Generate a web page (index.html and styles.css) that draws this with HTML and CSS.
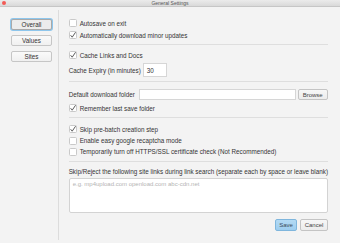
FILE: index.html
```html
<!DOCTYPE html>
<html>
<head>
<meta charset="utf-8">
<link rel="stylesheet" href="styles.css">
</head>
<body>
<div class="window">
  <div class="titlebar">
    <span class="close-dot"></span>
    <span class="title">General Settings</span>
  </div>
  <div class="main">
    <nav class="sidebar">
      <button class="nav-btn active">Overall</button>
      <button class="nav-btn">Values</button>
      <button class="nav-btn">Sites</button>
    </nav>
    <section class="content">
      <label class="check-row r1"><span class="cb"></span>Autosave on exit</label>
      <label class="check-row"><span class="cb checked"><svg viewBox="0 0 8 8"><polyline points="1.6,4.2 3.2,6.2 6.6,1.2"/></svg></span>Automatically download minor updates</label>
      <hr class="sep s1">
      <label class="check-row r3"><span class="cb checked"><svg viewBox="0 0 8 8"><polyline points="1.6,4.2 3.2,6.2 6.6,1.2"/></svg></span>Cache Links and Docs</label>
      <div class="field-row expiry">
        <span class="lbl">Cache Expiry (in minutes)</span>
        <span class="input small">30</span>
      </div>
      <hr class="sep s2">
      <div class="field-row download">
        <span class="lbl">Default download folder</span>
        <span class="input wide"></span>
        <button class="btn browse">Browse</button>
      </div>
      <label class="check-row r-remember"><span class="cb checked"><svg viewBox="0 0 8 8"><polyline points="1.6,4.2 3.2,6.2 6.6,1.2"/></svg></span>Remember last save folder</label>
      <hr class="sep s3">
      <label class="check-row r-skip"><span class="cb checked"><svg viewBox="0 0 8 8"><polyline points="1.6,4.2 3.2,6.2 6.6,1.2"/></svg></span>Skip pre-batch creation step</label>
      <label class="check-row short"><span class="cb"></span>Enable easy google recaptcha mode</label>
      <label class="check-row short"><span class="cb"></span>Temporarily turn off HTTPS/SSL certificate check (Not Recommended)</label>
      <hr class="sep s4">
      <div class="skip-label">Skip/Reject the following site links during link search (separate each by space or leave blank)</div>
      <div class="textarea"><span class="placeholder">e.g. mp4upload.com openload.com abc-cdn.net</span></div>
      <div class="actions">
        <button class="btn save">Save</button>
        <button class="btn cancel">Cancel</button>
      </div>
    </section>
  </div>
</div>
</body>
</html>
```

FILE: styles.css
```css
html, body {
  margin: 0;
  padding: 0;
}
body {
  width: 340px;
  height: 243px;
  overflow: hidden;
  background: #f3f3f3;
  font-family: "Liberation Sans", Arial, sans-serif;
  font-size: 6.3px;
  color: #333;
}
.window {
  width: 340px;
  height: 243px;
  display: flex;
  flex-direction: column;
}
.titlebar {
  height: 7px;
  flex: none;
  box-sizing: border-box;
  background: linear-gradient(#ebebeb, #d9d9d9);
  border-bottom: 1px solid #c6c6c6;
  position: relative;
  display: flex;
  align-items: center;
  justify-content: center;
}
.close-dot {
  position: absolute;
  left: 2px;
  top: 1px;
  width: 4px;
  height: 4px;
  border-radius: 50%;
  background: #f25a55;
}
.title {
  font-size: 5px;
  color: #555;
  line-height: 6px;
}
.main {
  display: flex;
  flex: 1;
  padding-top: 3px;
}
.sidebar {
  width: 58px;
  height: 221px;
  border-right: 1px solid #dcdcdc;
  box-sizing: border-box;
  display: flex;
  flex-direction: column;
  align-items: flex-start;
  gap: 5px;
  padding: 9px 0 0 11px;
  box-sizing: content-box;
  width: 47px;
}
.nav-btn {
  width: 41px;
  height: 11px;
  box-sizing: border-box;
  margin: 0;
  padding: 0;
  font-family: inherit;
  font-size: 6.3px;
  color: #333;
  background: linear-gradient(#fafafa, #f0f0f0);
  border: 1px solid #c6c6c6;
  border-radius: 2px;
}
.nav-btn.active {
  background: #ececec;
  border-color: #a9a9a9;
  box-shadow: 0 0 0 1px #8ec6ec;
}
.content {
  flex: 1;
  padding: 7px 12px 0 10px;
  display: flex;
  flex-direction: column;
}
.check-row {
  display: flex;
  align-items: center;
  height: 12px;
  gap: 3px;
  white-space: nowrap;
}
.check-row.short {
  height: 11px;
}
.cb {
  width: 8px;
  height: 8px;
  box-sizing: border-box;
  background: #fff;
  border: 1px solid #c9c9c9;
  border-radius: 1.5px;
  flex: none;
  position: relative;
}
.cb svg {
  position: absolute;
  left: -1px;
  top: -1px;
  width: 8px;
  height: 8px;
  fill: none;
  stroke: #4a4a4a;
  stroke-width: 0.9;
}
.sep {
  border: 0;
  height: 1px;
  background: #dedede;
  margin: 0;
}
.s1 { margin-top: 3px; }
.r3 { margin-top: 4px; }
.s2 { margin-top: 4px; }
.s3 { margin-top: 3px; }
.r-skip { margin-top: 5px; }
.s4 { margin-top: 4px; }
.field-row {
  display: flex;
  align-items: center;
  white-space: nowrap;
}
.expiry {
  margin-top: 2px;
  height: 14px;
}
.expiry .lbl {
  width: 74px;
}
.input {
  background: #fff;
  border: 1px solid #d6d6d6;
  box-sizing: border-box;
  display: flex;
  align-items: center;
}
.input.small {
  width: 24px;
  height: 14px;
  padding-left: 3px;
}
.download {
  margin-top: 7px;
  height: 11px;
}
.download .lbl {
  width: 70px;
}
.input.wide {
  width: 157px;
  height: 11px;
}
.btn {
  margin: 0;
  padding: 0;
  font-family: inherit;
  font-size: 6px;
  color: #444;
  box-sizing: border-box;
  border: 1px solid #c4c4c4;
  border-radius: 2px;
  background: linear-gradient(#f7f7f7, #ececec);
}
.browse {
  width: 30px;
  height: 11px;
  margin-left: 2px;
}
.r-remember {
  margin-top: 2px;
}
.skip-label {
  margin-top: 5px;
  height: 10px;
  line-height: 10px;
  white-space: nowrap;
}
.textarea {
  margin-top: 1px;
  height: 35px;
  background: #fff;
  border: 1px solid #d3d3d3;
  border-radius: 2px;
  box-sizing: border-box;
  padding: 1px 0 0 3px;
}
.placeholder {
  color: #b4b4b4;
  font-size: 6px;
  line-height: 8px;
}
.actions {
  margin-top: 6px;
  display: flex;
  justify-content: flex-end;
  gap: 3px;
}
.save {
  width: 22px;
  height: 12px;
  background: linear-gradient(#b3daf4, #9dcdef);
  border-color: #7fb6dd;
  color: #3b4a57;
}
.cancel {
  width: 28px;
  height: 12px;
}
```
